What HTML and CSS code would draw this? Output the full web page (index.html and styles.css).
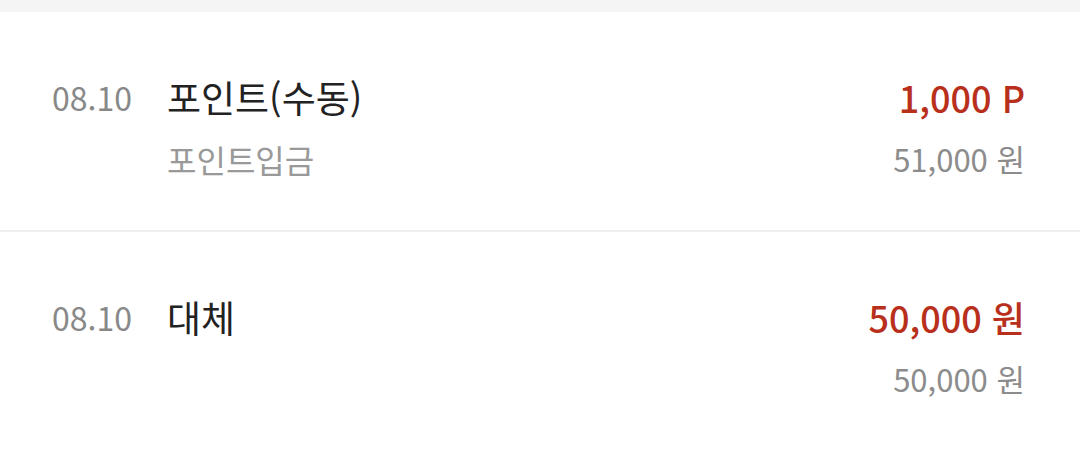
FILE: index.html
```html
<!DOCTYPE html>
<html lang="ko">
<head>
    <meta charset="UTF-8">
    <meta name="viewport" content="width=device-width, initial-scale=1.0">
    <title>포인트 내역</title>
    <link rel="stylesheet" href="styles.css">
</head>
<body>
    <div class="top-band"></div>
    <ul class="history">
        <li class="history-item">
            <div class="date">08.10</div>
            <div class="info">
                <div class="title">포인트(수동)</div>
                <div class="sub">포인트입금</div>
            </div>
            <div class="amounts">
                <div class="amount">1,000 P</div>
                <div class="balance">51,000 원</div>
            </div>
        </li>
        <li class="history-item">
            <div class="date">08.10</div>
            <div class="info">
                <div class="title">대체</div>
            </div>
            <div class="amounts">
                <div class="amount">50,000 원</div>
                <div class="balance">50,000 원</div>
            </div>
        </li>
    </ul>
</body>
</html>
```

FILE: styles.css
```css
body {
    margin: 0;
    padding: 0;
    background-color: #fff;
    font-family: "Noto Sans CJK KR", "Noto Sans", sans-serif;
}

.top-band {
    height: 12px;
    background-color: #f5f5f5;
}

.history {
    list-style: none;
    margin: 0;
    padding: 0;
}

.history-item {
    display: flex;
    align-items: flex-start;
    padding: 60px 55px 46px 52px;
    border-bottom: 2px solid #eeeeee;
}

.history-item:last-child {
    border-bottom: none;
}

.date {
    width: 115px;
    flex-shrink: 0;
    font-size: 32px;
    line-height: 50px;
    color: #888;
}

.info {
    flex: 1;
}

.title {
    font-size: 37px;
    line-height: 50px;
    color: #222;
}

.sub {
    margin-top: 12px;
    font-size: 32px;
    line-height: 50px;
    color: #999;
}

.amounts {
    text-align: right;
}

.amount {
    font-size: 36px;
    line-height: 50px;
    font-weight: 500;
    color: #b8301c;
}

.balance {
    margin-top: 12px;
    font-size: 31px;
    line-height: 50px;
    color: #8c8c8c;
}
```
